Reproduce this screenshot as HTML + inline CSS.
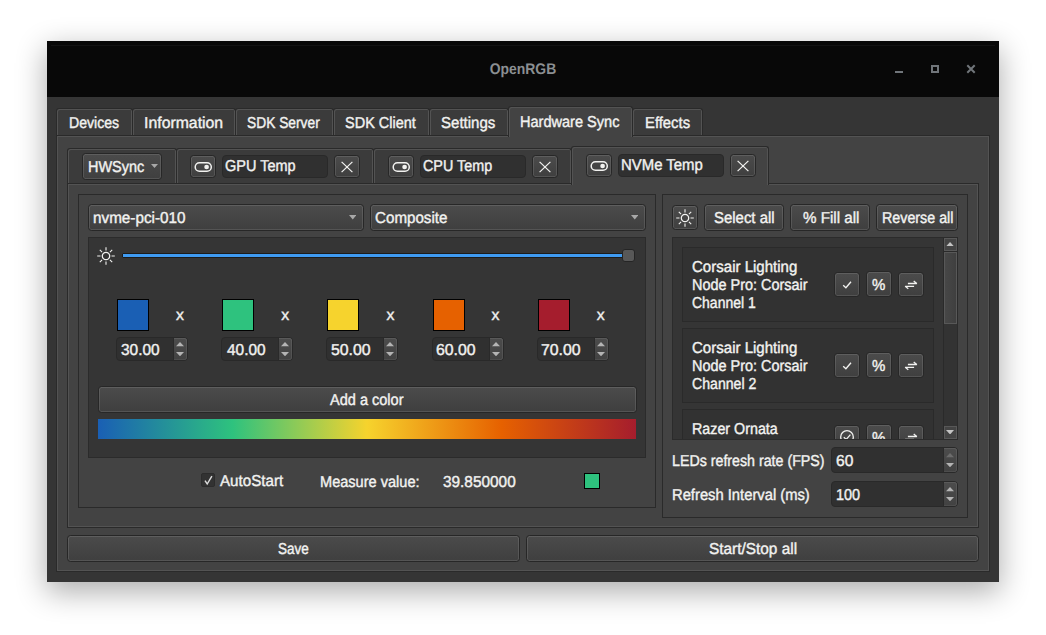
<!DOCTYPE html>
<html lang="en"><head><meta charset="utf-8"><title>OpenRGB</title>
<style>
html,body{margin:0;padding:0;}
body{width:1046px;height:635px;background:#fff;position:relative;overflow:hidden;
 font-family:"Liberation Sans",sans-serif;font-size:15.8px;color:#f2f2f0;text-rendering:geometricPrecision;}
div,span,svg{position:absolute;box-sizing:border-box;}
.t{white-space:nowrap;line-height:18px;height:18px;transform-origin:0 0;-webkit-text-stroke:0.4px #f2f2f0;}
.win{background:#353535;box-shadow:0 9px 28px 1px rgba(0,0,0,.32);}
.title{background:#080808;}
.tab{background:#3b3b3b;border:1px solid #2a2a2a;border-bottom:none;border-radius:3px 3px 0 0;
 box-shadow:inset 1px 1px 0 #535353,inset -1px 0 0 #535353;}
.tab.sel{background:#434343;}
.pane{background:#434343;border:1px solid #2a2a2a;box-shadow:inset 0 0 0 1px #535353;}
.grp{border:1px solid #2a2a2a;}
.btn{border:1px solid #272727;border-radius:3.5px;background:linear-gradient(#4b4b4b,#3f3f3f);
 box-shadow:inset 0 0 0 1px rgba(255,255,255,.11);}
.dark{background:#353535;border:1px solid #2b2b2b;}
.field{background:#303030;border:1px solid #292929;border-radius:4px;}
.sw{border:1px solid #000;}
</style></head>
<body>
<div class="win" style="left:47px;top:41px;width:952px;height:541px;"></div>
<div class="title" style="left:47px;top:41px;width:952px;height:56px;"></div>
<div class="" style="left:51px;top:45px;width:944px;height:1px;background:#131313;"></div>
<span class="t" style="left:47px;width:952px;top:59px;height:22px;line-height:22px;text-align:center;font-weight:bold;font-size:15.4px;transform:scaleX(0.905);transform-origin:50% 50%;color:#8b8f92;-webkit-text-stroke:0;">OpenRGB</span>
<svg style="left:880px;top:50px" width="110" height="40" viewBox="0 0 110 40"><g fill="none" stroke="#70757a" stroke-width="2"><path d="M15 22H23"/><rect x="52" y="16" width="6" height="6"/><path d="M87.3 15.3l7.4 7.4m0-7.4l-7.4 7.4"/></g></svg>
<div class="pane" style="left:56px;top:135px;width:934px;height:437px;"></div>
<div class="tab" style="left:56px;top:108px;width:77px;height:27px;"></div>
<span class="t" style="left:68.91px;top:115px;transform:scaleX(0.8927);">Devices</span>
<div class="tab" style="left:132px;top:108px;width:104px;height:27px;"></div>
<span class="t" style="left:144.1px;top:115px;">Information</span>
<div class="tab" style="left:235px;top:108px;width:99px;height:27px;"></div>
<span class="t" style="left:247.03px;top:115px;transform:scaleX(0.8723);">SDK Server</span>
<div class="tab" style="left:333px;top:108px;width:97px;height:27px;"></div>
<span class="t" style="left:345.28px;top:115px;transform:scaleX(0.9171);">SDK Client</span>
<div class="tab" style="left:429px;top:108px;width:80px;height:27px;"></div>
<span class="t" style="left:440.75px;top:115px;transform:scaleX(0.9518);">Settings</span>
<div class="tab sel" style="left:508px;top:106px;width:125px;height:31px;"></div>
<span class="t" style="left:520.48px;top:113.7px;transform:scaleX(0.9206);">Hardware Sync</span>
<div class="tab" style="left:632px;top:108px;width:71px;height:27px;"></div>
<span class="t" style="left:644.96px;top:115px;transform:scaleX(0.9383);">Effects</span>
<div class="pane" style="left:67px;top:183px;width:912px;height:345px;"></div>
<div class="tab" style="left:67px;top:148px;width:110px;height:35px;"></div>
<div class="btn" style="left:82px;top:153px;width:80px;height:27px;"></div>
<span class="t" style="left:87.88px;top:158.5px;transform:scaleX(0.915);">HWSync</span>
<svg style="left:150.7px;top:164.2px" width="7" height="4" viewBox="0 0 7 4"><path d="M0 0H7L3.5 4z" fill="#a8a8a8"/></svg>
<div class="tab" style="left:176px;top:148px;width:198px;height:35px;"></div>
<div class="btn" style="left:190px;top:155px;width:26px;height:23px;"></div>
<svg style="left:193.5px;top:160.5px" width="19" height="12" viewBox="0 0 19 12"><rect x="1.2" y="1.7" width="16.1" height="8.6" rx="4.3" fill="none" stroke="#f2f2f0" stroke-width="1.5"/><circle cx="12.6" cy="6" r="2.35" fill="#f2f2f0"/></svg>
<div class="field" style="left:222px;top:155px;width:106px;height:23px;"></div>
<span class="t" style="left:225.18px;top:158.4px;transform:scaleX(0.9171);">GPU Temp</span>
<div class="btn" style="left:334px;top:155px;width:26px;height:23px;"></div>
<svg style="left:339.9px;top:159.6px" width="14" height="14" viewBox="-7 -7 14 14"><path d="M-5.4 -5.1L5.4 5.1M5.4 -5.1L-5.4 5.1" stroke="#f2f2f0" stroke-width="1.25" fill="none"/></svg>
<div class="tab" style="left:373px;top:148px;width:199px;height:35px;"></div>
<div class="btn" style="left:388px;top:155px;width:26px;height:23px;"></div>
<svg style="left:391.5px;top:160.5px" width="19" height="12" viewBox="0 0 19 12"><rect x="1.2" y="1.7" width="16.1" height="8.6" rx="4.3" fill="none" stroke="#f2f2f0" stroke-width="1.5"/><circle cx="12.6" cy="6" r="2.35" fill="#f2f2f0"/></svg>
<div class="field" style="left:420px;top:155px;width:106px;height:23px;"></div>
<span class="t" style="left:423.29px;top:158.4px;transform:scaleX(0.9093);">CPU Temp</span>
<div class="btn" style="left:532px;top:155px;width:26px;height:23px;"></div>
<svg style="left:537.9px;top:159.6px" width="14" height="14" viewBox="-7 -7 14 14"><path d="M-5.4 -5.1L5.4 5.1M5.4 -5.1L-5.4 5.1" stroke="#f2f2f0" stroke-width="1.25" fill="none"/></svg>
<div class="tab sel" style="left:571px;top:146px;width:198px;height:39px;"></div>
<div class="btn" style="left:586px;top:154px;width:26px;height:23px;"></div>
<svg style="left:589.5px;top:159.5px" width="19" height="12" viewBox="0 0 19 12"><rect x="1.2" y="1.7" width="16.1" height="8.6" rx="4.3" fill="none" stroke="#f2f2f0" stroke-width="1.5"/><circle cx="12.6" cy="6" r="2.35" fill="#f2f2f0"/></svg>
<div class="field" style="left:618px;top:154px;width:106px;height:23px;"></div>
<span class="t" style="left:621.46px;top:157.2px;transform:scaleX(0.9447);">NVMe Temp</span>
<div class="btn" style="left:730px;top:154px;width:26px;height:23px;"></div>
<svg style="left:735.9px;top:158.6px" width="14" height="14" viewBox="-7 -7 14 14"><path d="M-5.4 -5.1L5.4 5.1M5.4 -5.1L-5.4 5.1" stroke="#f2f2f0" stroke-width="1.25" fill="none"/></svg>
<div class="grp" style="left:78px;top:194px;width:578px;height:314px;"></div>
<div class="btn" style="left:88px;top:204px;width:276px;height:27px;"></div>
<span class="t" style="left:93.23px;top:209.6px;transform:scaleX(0.9674);">nvme-pci-010</span>
<svg style="left:348.7px;top:215.3px" width="7.5" height="4.5" viewBox="0 0 7.5 4.5"><path d="M0 0H7.5L3.75 4.5z" fill="#a8a8a8"/></svg>
<div class="btn" style="left:370px;top:204px;width:276px;height:27px;"></div>
<span class="t" style="left:375.04px;top:209.6px;transform:scaleX(0.9595);">Composite</span>
<svg style="left:630.7px;top:215.3px" width="7.5" height="4.5" viewBox="0 0 7.5 4.5"><path d="M0 0H7.5L3.75 4.5z" fill="#a8a8a8"/></svg>
<div class="dark" style="left:88px;top:237px;width:558px;height:221px;"></div>
<svg style="left:96.2px;top:245.5px" width="20" height="20" viewBox="-10 -10 20 20"><g fill="none" stroke="#f2f2f0"><circle r="3.7" stroke-width="1.3"/><path d="M5.50 0.00L8.80 0.00M3.89 3.89L6.22 6.22M0.00 5.50L0.00 8.80M-3.89 3.89L-6.22 6.22M-5.50 0.00L-8.80 0.00M-3.89 -3.89L-6.22 -6.22M-0.00 -5.50L-0.00 -8.80M3.89 -3.89L6.22 -6.22" stroke-width="1.1"/></g></svg>
<div class="" style="left:122px;top:253px;width:506px;height:5px;background:#3f9bf2;border:1px solid #1c1c1c;border-radius:1px;"></div>
<div class="" style="left:622px;top:249px;width:13px;height:13px;background:#585858;border:1px solid #252525;border-radius:3px;"></div>
<div class="sw" style="left:117px;top:299px;width:32px;height:32px;background:#1a5fb4;"></div>
<span class="t" style="left:176.0px;top:307.1px;">x</span>
<div class="field" style="left:116px;top:337px;width:72px;height:24px;"></div>
<span class="t" style="left:121.4px;top:342.4px;transform:scaleX(0.9769);">30.00</span>
<div class="" style="left:173px;top:338px;width:14px;height:22px;background:linear-gradient(#4c4c4c,#424242);border-left:1px solid #2a2a2a;border-radius:0 3px 3px 0;box-shadow:inset -1px 0 0 rgba(255,255,255,.08),inset 0 1px 0 rgba(255,255,255,.08),inset 0 -1px 0 rgba(255,255,255,.06);"></div>
<svg style="left:175.5px;top:342.4px" width="8" height="4.3" viewBox="0 0 8 4.3"><path d="M0 4.3H8L4.0 0z" fill="#b4b4b4"/></svg>
<svg style="left:175.5px;top:352.0px" width="8" height="4.3" viewBox="0 0 8 4.3"><path d="M0 0H8L4.0 4.3z" fill="#b4b4b4"/></svg>
<div class="sw" style="left:222px;top:299px;width:32px;height:32px;background:#2ec27e;"></div>
<span class="t" style="left:281.2px;top:307.1px;">x</span>
<div class="field" style="left:221px;top:337px;width:72px;height:24px;"></div>
<span class="t" style="left:226.6px;top:342.4px;transform:scaleX(0.9769);">40.00</span>
<div class="" style="left:278px;top:338px;width:14px;height:22px;background:linear-gradient(#4c4c4c,#424242);border-left:1px solid #2a2a2a;border-radius:0 3px 3px 0;box-shadow:inset -1px 0 0 rgba(255,255,255,.08),inset 0 1px 0 rgba(255,255,255,.08),inset 0 -1px 0 rgba(255,255,255,.06);"></div>
<svg style="left:280.5px;top:342.4px" width="8" height="4.3" viewBox="0 0 8 4.3"><path d="M0 4.3H8L4.0 0z" fill="#b4b4b4"/></svg>
<svg style="left:280.5px;top:352.0px" width="8" height="4.3" viewBox="0 0 8 4.3"><path d="M0 0H8L4.0 4.3z" fill="#b4b4b4"/></svg>
<div class="sw" style="left:327px;top:299px;width:32px;height:32px;background:#f6d32d;"></div>
<span class="t" style="left:386.4px;top:307.1px;">x</span>
<div class="field" style="left:326px;top:337px;width:72px;height:24px;"></div>
<span class="t" style="left:330.8px;top:342.4px;transform:scaleX(1.0026);">50.00</span>
<div class="" style="left:383px;top:338px;width:14px;height:22px;background:linear-gradient(#4c4c4c,#424242);border-left:1px solid #2a2a2a;border-radius:0 3px 3px 0;box-shadow:inset -1px 0 0 rgba(255,255,255,.08),inset 0 1px 0 rgba(255,255,255,.08),inset 0 -1px 0 rgba(255,255,255,.06);"></div>
<svg style="left:385.5px;top:342.4px" width="8" height="4.3" viewBox="0 0 8 4.3"><path d="M0 4.3H8L4.0 0z" fill="#b4b4b4"/></svg>
<svg style="left:385.5px;top:352.0px" width="8" height="4.3" viewBox="0 0 8 4.3"><path d="M0 0H8L4.0 4.3z" fill="#b4b4b4"/></svg>
<div class="sw" style="left:433px;top:299px;width:32px;height:32px;background:#e66100;"></div>
<span class="t" style="left:491.6px;top:307.1px;">x</span>
<div class="field" style="left:432px;top:337px;width:72px;height:24px;"></div>
<span class="t" style="left:436.0px;top:342.4px;transform:scaleX(1.0026);">60.00</span>
<div class="" style="left:489px;top:338px;width:14px;height:22px;background:linear-gradient(#4c4c4c,#424242);border-left:1px solid #2a2a2a;border-radius:0 3px 3px 0;box-shadow:inset -1px 0 0 rgba(255,255,255,.08),inset 0 1px 0 rgba(255,255,255,.08),inset 0 -1px 0 rgba(255,255,255,.06);"></div>
<svg style="left:491.5px;top:342.4px" width="8" height="4.3" viewBox="0 0 8 4.3"><path d="M0 4.3H8L4.0 0z" fill="#b4b4b4"/></svg>
<svg style="left:491.5px;top:352.0px" width="8" height="4.3" viewBox="0 0 8 4.3"><path d="M0 0H8L4.0 4.3z" fill="#b4b4b4"/></svg>
<div class="sw" style="left:538px;top:299px;width:32px;height:32px;background:#a51d2d;"></div>
<span class="t" style="left:596.8px;top:307.1px;">x</span>
<div class="field" style="left:537px;top:337px;width:72px;height:24px;"></div>
<span class="t" style="left:541.2px;top:342.4px;transform:scaleX(1.0026);">70.00</span>
<div class="" style="left:594px;top:338px;width:14px;height:22px;background:linear-gradient(#4c4c4c,#424242);border-left:1px solid #2a2a2a;border-radius:0 3px 3px 0;box-shadow:inset -1px 0 0 rgba(255,255,255,.08),inset 0 1px 0 rgba(255,255,255,.08),inset 0 -1px 0 rgba(255,255,255,.06);"></div>
<svg style="left:596.5px;top:342.4px" width="8" height="4.3" viewBox="0 0 8 4.3"><path d="M0 4.3H8L4.0 0z" fill="#b4b4b4"/></svg>
<svg style="left:596.5px;top:352.0px" width="8" height="4.3" viewBox="0 0 8 4.3"><path d="M0 0H8L4.0 4.3z" fill="#b4b4b4"/></svg>
<div class="btn" style="left:98px;top:386px;width:539px;height:27px;"></div>
<span class="t" style="left:330.3px;top:391.8px;transform:scaleX(0.92);">Add a color</span>
<div class="" style="left:98px;top:419px;width:538px;height:20px;background:linear-gradient(90deg,#1a5fb4,#2ec27e 25%,#f6d32d 50%,#e66100 75%,#a51d2d);"></div>
<div class="" style="left:201px;top:473px;width:14px;height:14px;background:#323232;border:1px solid #2c2c2c;border-radius:2px;"></div>
<svg style="left:202px;top:474px" width="12" height="12" viewBox="0 0 12 12"><path d="M3 6.6L5.2 10L9.9 2.2" stroke="#dcdcdc" stroke-width="1.45" fill="none"/></svg>
<span class="t" style="left:220.2px;top:472.9px;transform:scaleX(0.9591);">AutoStart</span>
<span class="t" style="left:320.38px;top:473.8px;transform:scaleX(0.9217);">Measure value:</span>
<span class="t" style="left:442.9px;top:473.8px;transform:scaleX(0.9733);">39.850000</span>
<div class="sw" style="left:584px;top:473px;width:16px;height:16px;background:#2ec27e;"></div>
<div class="grp" style="left:662px;top:194px;width:306px;height:324px;"></div>
<div class="btn" style="left:672px;top:205px;width:26px;height:25px;"></div>
<svg style="left:675.1px;top:207.6px" width="20" height="20" viewBox="-10 -10 20 20"><g fill="none" stroke="#f2f2f0"><circle r="3.7" stroke-width="1.3"/><path d="M5.50 0.00L8.80 0.00M3.89 3.89L6.22 6.22M0.00 5.50L0.00 8.80M-3.89 3.89L-6.22 6.22M-5.50 0.00L-8.80 0.00M-3.89 -3.89L-6.22 -6.22M-0.00 -5.50L-0.00 -8.80M3.89 -3.89L6.22 -6.22" stroke-width="1.1"/></g></svg>
<div class="btn" style="left:704px;top:204px;width:80px;height:27px;"></div>
<span class="t" style="left:714.05px;top:209.8px;transform:scaleX(0.9452);">Select all</span>
<div class="btn" style="left:790px;top:204px;width:80px;height:27px;"></div>
<span class="t" style="left:802.6px;top:209.8px;transform:scaleX(0.9603);">% Fill all</span>
<div class="btn" style="left:876px;top:204px;width:82px;height:27px;"></div>
<span class="t" style="left:881.8px;top:209.8px;transform:scaleX(0.9039);">Reverse all</span>
<div class="dark" style="left:672px;top:237px;width:286px;height:203px;overflow:hidden;background:#353535;">
<div style="left:9px;top:9px;width:252px;height:75px;background:#323232;border:1px solid #2a2a2a;"></div>
<span class="t" style="left:19.05px;top:20.7px;transform:scaleX(0.9523);">Corsair Lighting</span>
<span class="t" style="left:19.09px;top:38.8px;transform:scaleX(0.9143);">Node Pro: Corsair</span>
<span class="t" style="left:19.12px;top:56.8px;transform:scaleX(0.8845);">Channel 1</span>
<div class="btn" style="left:161px;top:34px;width:26px;height:25px"></div>
<svg style="left:167px;top:40px" width="14" height="13" viewBox="840 278 14 13"><path d="M843.2 285.3L845.9 287.8L851 281.8" stroke="#f2f2f0" stroke-width="1.35" fill="none"/></svg>
<div class="btn" style="left:193px;top:33px;width:26px;height:26px"></div>
<span class="t" style="left:199.39999999999998px;top:38.60000000000002px;transform:scaleX(0.95)">%</span>
<div class="btn" style="left:225px;top:34px;width:26px;height:25px"></div>
<svg style="left:230px;top:40px" width="16" height="13" viewBox="903 278 16 13"><g stroke="#f2f2f0" stroke-width="1.3" fill="none" stroke-linejoin="bevel"><path d="M907.9 283.5H916.8L913.7 281"/><path d="M914.1 286.3H905.2L908.3 288.8"/></g></svg>
<div style="left:9px;top:90px;width:252px;height:75px;background:#323232;border:1px solid #2a2a2a;"></div>
<span class="t" style="left:19.05px;top:101.7px;transform:scaleX(0.9523);">Corsair Lighting</span>
<span class="t" style="left:19.09px;top:119.8px;transform:scaleX(0.9143);">Node Pro: Corsair</span>
<span class="t" style="left:19.11px;top:137.8px;transform:scaleX(0.893);">Channel 2</span>
<div class="btn" style="left:161px;top:115px;width:26px;height:25px"></div>
<svg style="left:167px;top:121px" width="14" height="13" viewBox="840 359 14 13"><path d="M843.2 366.3L845.9 368.8L851 362.8" stroke="#f2f2f0" stroke-width="1.35" fill="none"/></svg>
<div class="btn" style="left:193px;top:114px;width:26px;height:26px"></div>
<span class="t" style="left:199.39999999999998px;top:119.60000000000002px;transform:scaleX(0.95)">%</span>
<div class="btn" style="left:225px;top:115px;width:26px;height:25px"></div>
<svg style="left:230px;top:121px" width="16" height="13" viewBox="903 359 16 13"><g stroke="#f2f2f0" stroke-width="1.3" fill="none" stroke-linejoin="bevel"><path d="M907.9 364.5H916.8L913.7 362"/><path d="M914.1 367.3H905.2L908.3 369.8"/></g></svg>
<div style="left:9px;top:171px;width:252px;height:57px;background:#323232;border:1px solid #2a2a2a;"></div>
<span class="t" style="left:19.4px;top:182.7px;transform:scaleX(0.9043);">Razer Ornata</span>
<div class="btn" style="left:161px;top:187px;width:26px;height:25px"></div>
<svg style="left:166.20000000000005px;top:191.3px" width="16" height="16" viewBox="0 0 16 16"><circle cx="8" cy="8" r="6.3" stroke="#f2f2f0" stroke-width="1.3" fill="none"/><path d="M4.8 8.2L7.2 10.4L11.4 5.6" stroke="#f2f2f0" stroke-width="1.3" fill="none"/></svg>
<div class="btn" style="left:193px;top:186px;width:26px;height:26px"></div>
<span class="t" style="left:199.39999999999998px;top:191.60000000000002px;transform:scaleX(0.95)">%</span>
<div class="btn" style="left:225px;top:187px;width:26px;height:25px"></div>
<svg style="left:230px;top:193px" width="16" height="13" viewBox="903 431 16 13"><g stroke="#f2f2f0" stroke-width="1.3" fill="none" stroke-linejoin="bevel"><path d="M907.9 436.5H916.8L913.7 434"/><path d="M914.1 439.3H905.2L908.3 441.8"/></g></svg>
<div style="left:270px;top:0;width:14px;height:201px;background:#333;border-left:1px solid #2a2a2a;"></div>
<div style="left:271px;top:0;width:13px;height:13px;background:#444;border:1px solid #585858;"></div>
<svg style="left:273px;top:3.7px" width="8.1" height="4.5" viewBox="0 0 8.1 4.5"><path d="M0 4.5H8.1L4.05 0z" fill="#c4c4c4"/></svg>
<div style="left:271px;top:13px;width:13px;height:1px;background:#2a2a2a;"></div>
<div style="left:271px;top:14px;width:13px;height:72px;background:linear-gradient(90deg,#474747,#3f3f3f);border:1px solid #585858;"></div>
<div style="left:271px;top:188px;width:13px;height:13px;background:#444;border:1px solid #585858;"></div>
<svg style="left:273px;top:191.8px" width="8.1" height="4.5" viewBox="0 0 8.1 4.5"><path d="M0 0H8.1L4.05 4.5z" fill="#c4c4c4"/></svg>
</div>
<span class="t" style="left:672.0px;top:452.8px;transform:scaleX(0.9006);">LEDs refresh rate (FPS)</span>
<span class="t" style="left:671.97px;top:486.6px;transform:scaleX(0.9342);">Refresh Interval (ms)</span>
<div class="field" style="left:831px;top:447px;width:127px;height:26px;"></div>
<span class="t" style="left:836.11px;top:452.8px;transform:scaleX(0.9875);">60</span>
<div class="" style="left:943px;top:448px;width:14px;height:24px;background:linear-gradient(#4c4c4c,#424242);border-left:1px solid #2a2a2a;border-radius:0 3px 3px 0;box-shadow:inset -1px 0 0 rgba(255,255,255,.08),inset 0 1px 0 rgba(255,255,255,.08),inset 0 -1px 0 rgba(255,255,255,.06);"></div>
<svg style="left:945.5px;top:453.4px" width="8" height="4.3" viewBox="0 0 8 4.3"><path d="M0 4.3H8L4.0 0z" fill="#6c6c6c"/></svg>
<svg style="left:945.5px;top:463.0px" width="8" height="4.3" viewBox="0 0 8 4.3"><path d="M0 0H8L4.0 4.3z" fill="#b4b4b4"/></svg>
<div class="field" style="left:831px;top:481px;width:127px;height:26px;"></div>
<span class="t" style="left:836.18px;top:486.6px;transform:scaleX(0.916);">100</span>
<div class="" style="left:943px;top:482px;width:14px;height:24px;background:linear-gradient(#4c4c4c,#424242);border-left:1px solid #2a2a2a;border-radius:0 3px 3px 0;box-shadow:inset -1px 0 0 rgba(255,255,255,.08),inset 0 1px 0 rgba(255,255,255,.08),inset 0 -1px 0 rgba(255,255,255,.06);"></div>
<svg style="left:945.5px;top:487.4px" width="8" height="4.3" viewBox="0 0 8 4.3"><path d="M0 4.3H8L4.0 0z" fill="#b4b4b4"/></svg>
<svg style="left:945.5px;top:497.0px" width="8" height="4.3" viewBox="0 0 8 4.3"><path d="M0 0H8L4.0 4.3z" fill="#b4b4b4"/></svg>
<div class="btn" style="left:67px;top:535px;width:453px;height:27px;"></div>
<span class="t" style="left:277.64px;top:540.8px;transform:scaleX(0.8571);">Save</span>
<div class="btn" style="left:526px;top:535px;width:453px;height:27px;"></div>
<span class="t" style="left:708.53px;top:540.8px;transform:scaleX(0.9742);">Start/Stop all</span>
</body></html>
